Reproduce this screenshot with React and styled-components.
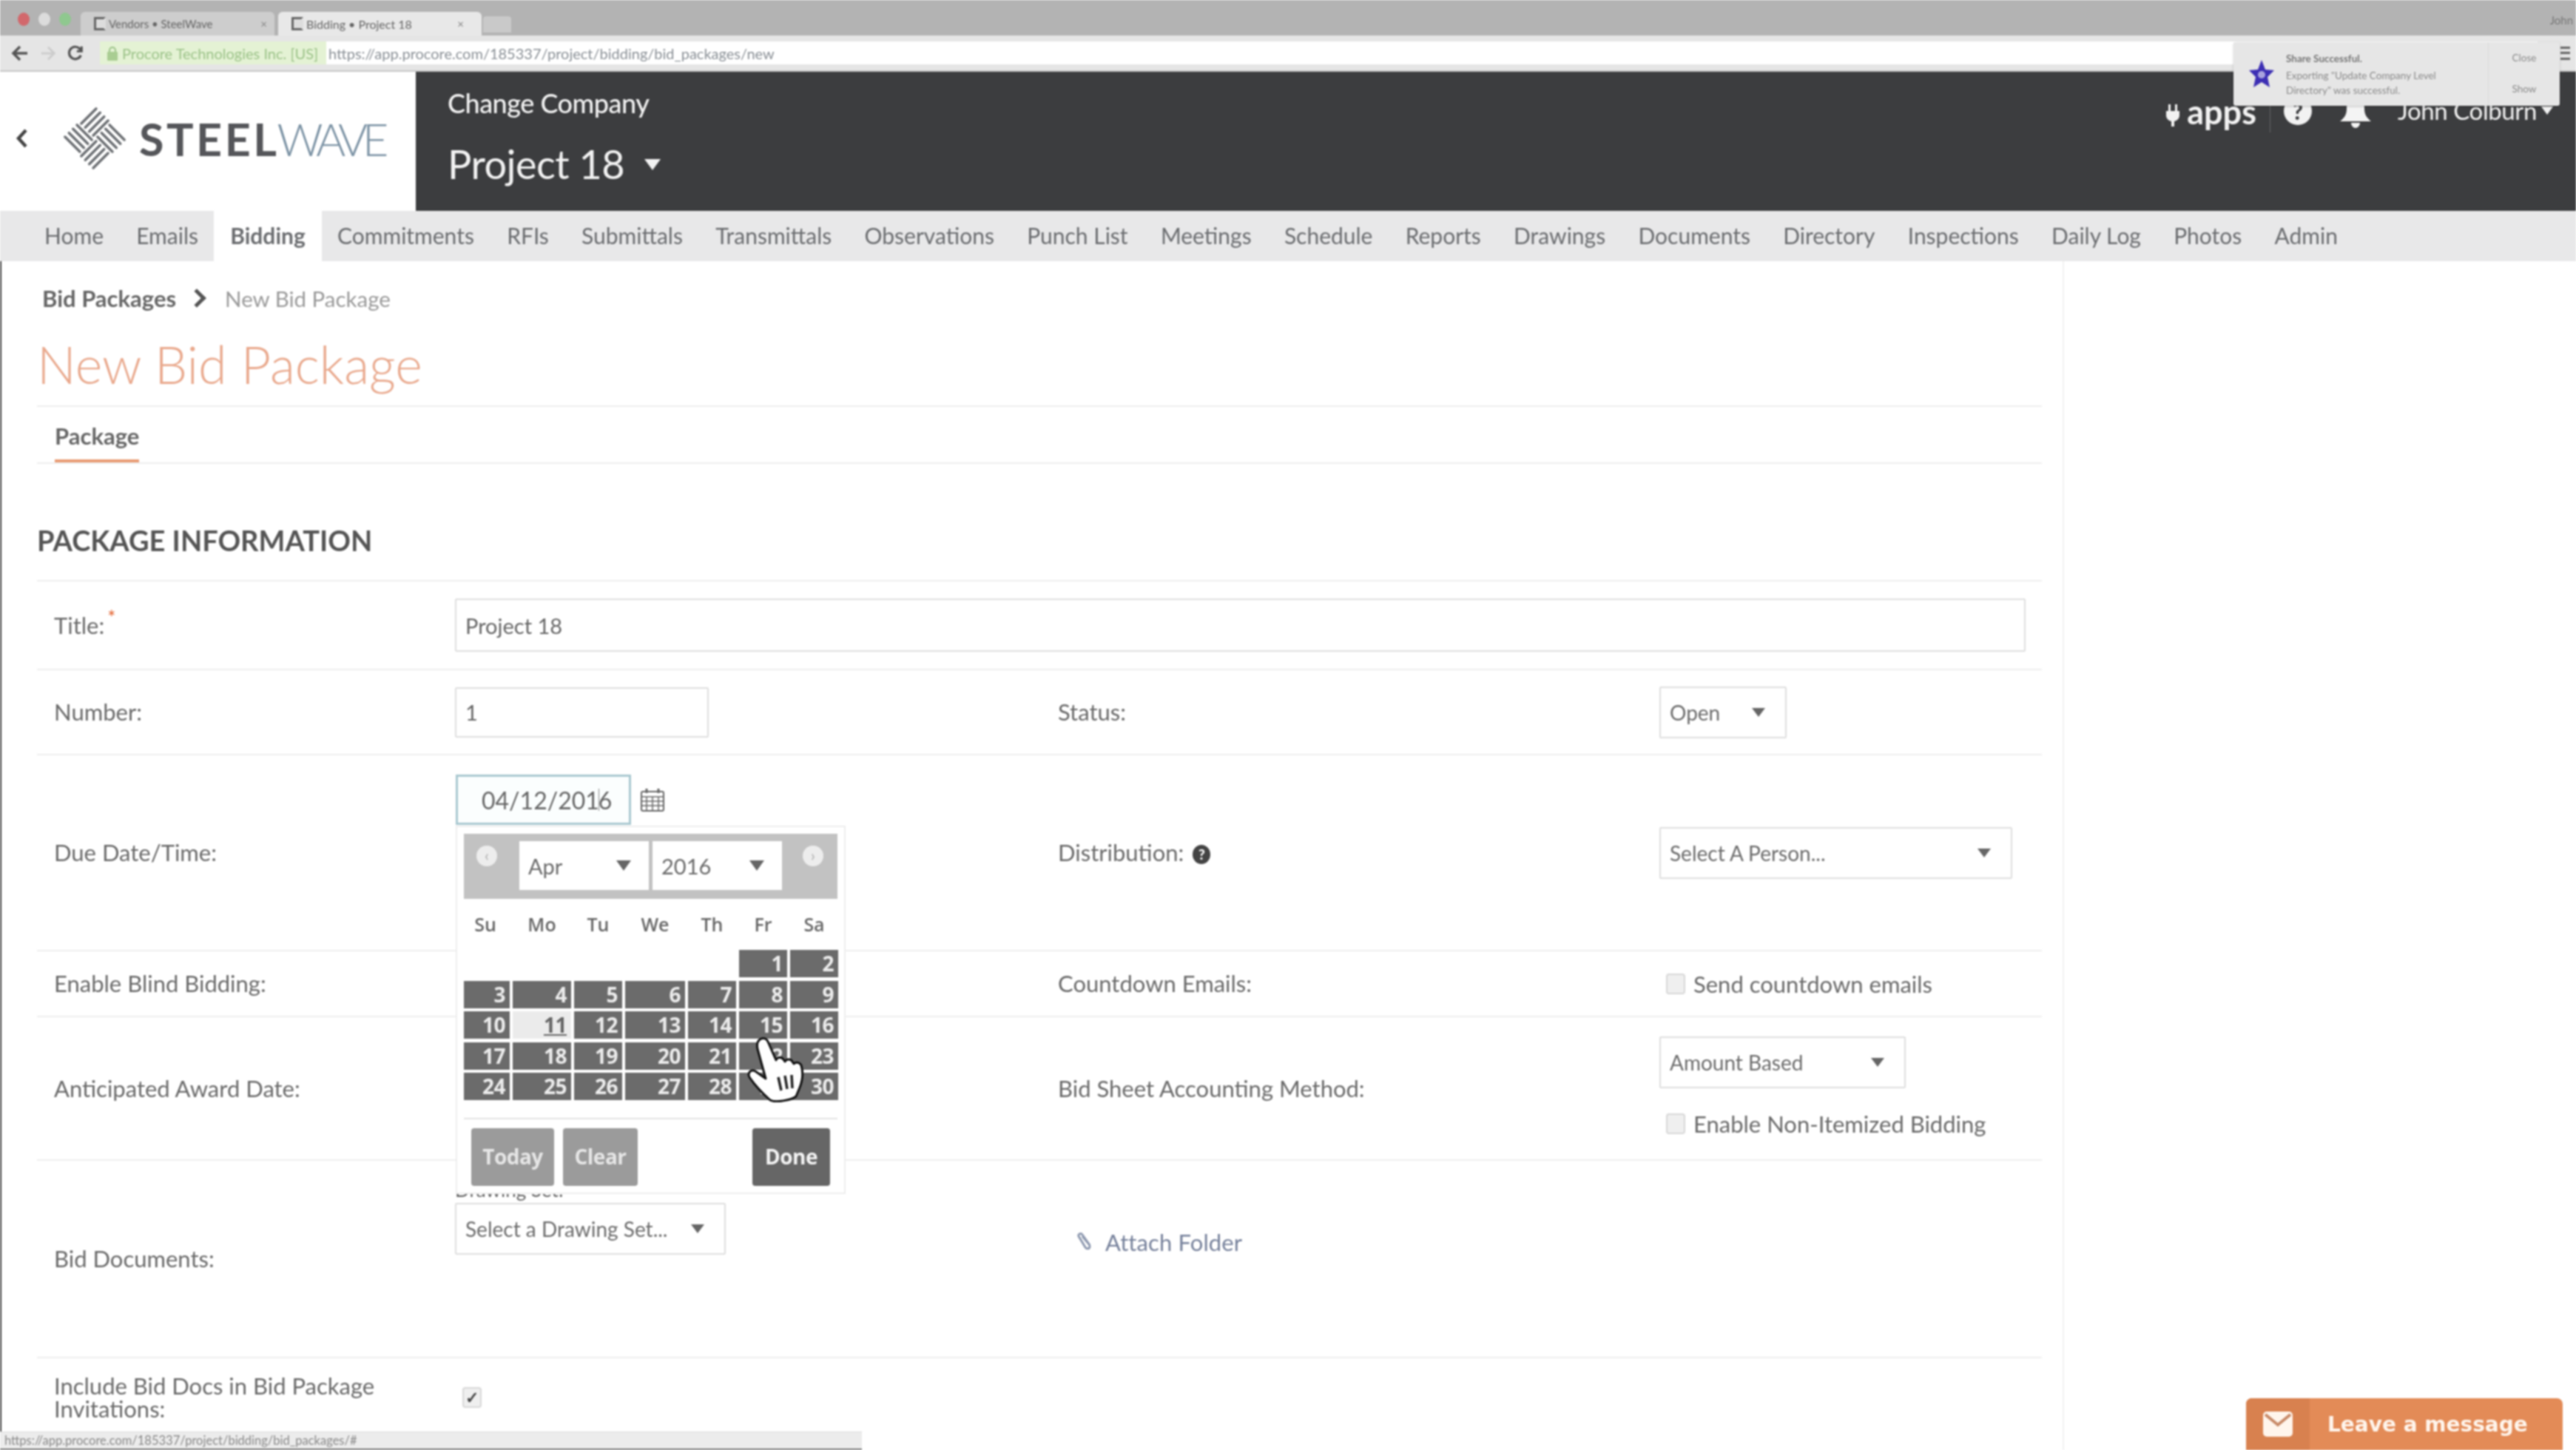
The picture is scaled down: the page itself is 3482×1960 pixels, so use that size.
import React from "react";
import styled, { createGlobalStyle } from "styled-components";

const Global = createGlobalStyle`
  html, body { margin: 0; padding: 0; background: #fff; }
  body { font-family: Lato, "Open Sans", sans-serif; color: #666; }
  * { box-sizing: border-box; }
`;

const Screen = styled.div`
  position: relative;
  width: 3482px;
  height: 1960px;
  overflow: hidden;
  display: flex;
  flex-direction: column;
  background: #fff;
  filter: blur(1px);
`;

/* browser chrome */
const TabStrip = styled.div`
  height: 48px;
  flex: none;
  background: #b3b3b3;
  display: flex;
  align-items: flex-end;
  padding-left: 18px;
`;
const Light = styled.span`
  width: 16px;
  height: 18px;
  margin: 0 6px 13px;
  border-radius: 50%;
  background: ${(p) => p.$c};
`;
const BrowserTab = styled.div`
  width: ${(p) => p.$w}px;
  height: 32px;
  margin-left: ${(p) => p.$ml}px;
  padding: 0 ${(p) => (p.$active ? 24 : 10)}px 0 18px;
  display: flex;
  align-items: center;
  gap: 4px;
  border-radius: 6px 6px 0 0;
  background: ${(p) => (p.$active ? "#e8e8e8" : "#cdcdcd")};
  font-size: ${(p) => (p.$active ? 16 : 15)}px;
  color: #666;
  white-space: nowrap;
`;
const Favicon = styled.span`
  width: 16px;
  height: 18px;
  border: 3px solid #666;
  border-right-color: transparent;
  background: #ddd;
  flex: none;
`;
const TabClose = styled.span`
  margin-left: auto;
  color: #888;
  font-size: 15px;
`;
const NewTab = styled.div`
  width: 38px;
  height: 22px;
  margin: 0 0 4px 2px;
  border-radius: 4px 4px 0 0;
  background: #c9c9c9;
`;
const ChromeUser = styled.div`
  margin: 0 4px 12px auto;
  font-size: 15px;
  color: #777;
`;
const AddressBar = styled.div`
  height: 49px;
  flex: none;
  background: #e5e5e5;
  display: flex;
  align-items: center;
  padding: 0 0 0 15px;
  border-bottom: 2px solid #c6c6c6;
`;
const NavIcons = styled.div`
  width: 120px;
  flex: none;
  display: flex;
  align-items: center;
  gap: 15px;
`;
const Field = styled.div`
  width: 3295px;
  height: 31px;
  display: flex;
  align-items: center;
  background: #fff;
  font-size: 20px;
  color: #8a9096;
  white-space: nowrap;
`;
const Secure = styled.div`
  width: 306px;
  height: 100%;
  padding-left: 10px;
  display: flex;
  align-items: center;
  gap: 6px;
  background: #e4f2d4;
  color: #9cc389;
  margin-right: 3px;
`;
const Hamburger = styled.div`
  position: absolute;
  left: 3461px;
  top: 63px;
  width: 13px;
  height: 18px;
  border-top: 3px solid #666;
  border-bottom: 3px solid #666;
  &::after {
    content: "";
    display: block;
    margin-top: 4px;
    height: 3px;
    background: #666;
  }
`;

/* notification */
const Toast = styled.div`
  position: absolute;
  left: 3019px;
  top: 57px;
  width: 441px;
  height: 86px;
  display: flex;
  background: #e6e6e6;
  border-radius: 3px;
  box-shadow: 0 1px 3px rgba(0, 0, 0, 0.2);
  font-size: 13.5px;
  color: #8b8b8b;
`;
const ToastStar = styled.div`
  width: 71px;
  flex: none;
  display: flex;
  align-items: center;
  justify-content: center;
  padding-left: 4px;
`;
const ToastBody = styled.div`
  width: 273px;
  flex: none;
  padding-top: 12px;
  line-height: 20px;
`;
const ToastTitle = styled.div`
  color: #777;
  font-weight: 700;
  margin-bottom: 3px;
`;
const ToastActions = styled.div`
  flex: 1;
  border-left: 1px solid #dadada;
  display: flex;
  flex-direction: column;
  align-items: center;
  justify-content: space-around;
  padding: 0 0 2px;
`;

/* procore header */
const Header = styled.div`
  height: 188px;
  flex: none;
  display: flex;
  background: #fff;
`;
const Brand = styled.div`
  width: 562px;
  flex: none;
  display: flex;
  align-items: center;
  padding: 0 0 0 20px;
  margin-top: -8px;
`;
const Wordmark = styled.div`
  margin-left: 16px;
  font-size: 61px;
  letter-spacing: 3.5px;
  line-height: 1;
  white-space: nowrap;
  color: #55565a;
  font-weight: 700;
`;
const Wave = styled.span`
  font-weight: 300;
  color: #7b92a4;
  letter-spacing: -7px;
  margin-left: -3px;
`;
const Dark = styled.div`
  flex: 1;
  background: #3c3d3f;
  color: #f2f2f2;
  display: flex;
  justify-content: space-between;
  padding-left: 43px;
`;
const CompanyBlock = styled.div`
  display: flex;
  flex-direction: column;
`;
const ChangeCompany = styled.div`
  margin-top: 21px;
  font-size: 36px;
  line-height: 42px;
  font-weight: 500;
  letter-spacing: -0.5px;
`;
const ProjectName = styled.div`
  margin-top: 22px;
  display: flex;
  align-items: center;
  gap: 27px;
  font-size: 54px;
  line-height: 80px;
  letter-spacing: -0.5px;
`;
const Caret = styled.span`
  display: inline-block;
  flex: none;
  width: 0;
  height: 0;
  border-left: ${(p) => p.$s || 9}px solid transparent;
  border-right: ${(p) => p.$s || 9}px solid transparent;
  border-top: ${(p) => (p.$s || 9) * 1.4}px solid ${(p) => p.$c || "#666"};
`;
const UserTools = styled.div`
  display: flex;
  align-items: flex-start;
  padding: 36px 31px 0 0;
`;
const Apps = styled.div`
  display: flex;
  align-items: center;
  gap: 10px;
  height: 46px;
  padding-right: 18px;
  border-right: 1px solid #666;
  font-size: 45px;
  font-weight: 700;
  line-height: 40px;
`;
const AppsText = styled.span`
  margin-top: -10px;
`;
const HelpBadge = styled.div`
  width: 38px;
  height: 38px;
  margin: -2px 0 0 18px;
  border-radius: 50%;
  background: #f2f2f2;
  color: #3c3d3f;
  font-size: 30px;
  font-weight: 900;
  line-height: 38px;
  text-align: center;
`;
const BellWrap = styled.div`
  position: relative;
  margin: -4px 0 0 38px;
  width: 42px;
  height: 44px;
`;
const BellDot = styled.span`
  position: absolute;
  right: -4px;
  top: -2px;
  width: 15px;
  height: 15px;
  border-radius: 50%;
  background: #c0405a;
`;
const UserName = styled.div`
  margin-left: 36px;
  display: flex;
  align-items: center;
  gap: 6px;
  font-size: 33px;
  line-height: 32px;
  letter-spacing: -0.4px;
`;

/* nav */
const NavBar = styled.div`
  height: 68px;
  flex: none;
  display: flex;
  background: #e8e8e9;
  padding-left: 37px;
`;
const NavItem = styled.div`
  height: 100%;
  padding: 0 ${(p) => (p.$active ? 22 : 23)}px 3px;
  margin-right: -1.75px;
  display: flex;
  align-items: center;
  font-size: 30px;
  color: #6b6d70;
  font-weight: ${(p) => (p.$active ? 700 : 400)};
  background: ${(p) => (p.$active ? "#fff" : "transparent")};
  white-space: nowrap;
`;

/* page */
const Main = styled.div`
  flex: 1;
  width: 2790px;
  padding-left: 48px;
  border-left: 2px solid #3a3a3a;
  border-right: 2px solid #f1f1f1;
  overflow: hidden;
`;
const Content = styled.div`
  width: 2710px;
`;
const Breadcrumb = styled.div`
  height: 100px;
  padding-left: 7px;
  display: flex;
  align-items: center;
  font-size: 29.5px;
  color: #9a9a9a;
`;
const Crumb = styled.span`
  font-size: 31px;
  font-weight: 700;
  color: #666;
`;
const CrumbArrow = styled.span`
  width: 18px;
  height: 18px;
  margin: 0 29px 0 19px;
  border-top: 5px solid #555;
  border-right: 5px solid #555;
  transform: rotate(45deg);
`;
const PageTitle = styled.h1`
  margin: 0;
  height: 97px;
  font-size: 70px;
  line-height: 78px;
  font-weight: 300;
  color: #e9a88c;
  border-bottom: 2px solid #eee;
`;
const Tabs = styled.div`
  height: 77px;
  padding-left: 24px;
  border-bottom: 2px solid #eee;
`;
const ActiveTab = styled.div`
  display: inline-block;
  height: 75px;
  padding-top: 20px;
  font-size: 31px;
  line-height: 38px;
  font-weight: 700;
  color: #666;
  border-bottom: 4px solid #e99a72;
`;
const SectionTitle = styled.h2`
  margin: 0;
  height: 159px;
  padding-top: 81px;
  font-size: 38px;
  line-height: 44px;
  font-weight: 700;
  color: #555;
  border-bottom: 2px solid #eee;
`;
const Row = styled.div`
  position: relative;
  height: ${(p) => p.$h}px;
  display: grid;
  grid-template-columns: 565px 815px 813px 1fr;
  align-items: center;
  border-bottom: ${(p) => (p.$open ? "none" : "2px solid #eee")};
`;
const Label = styled.div`
  padding-left: ${(p) => (p.$first ? 23 : 0)}px;
  font-size: 31px;
  line-height: 31px;
  color: #6a6a6a;
  white-space: pre-line;
`;
const Req = styled.span`
  position: relative;
  top: -12px;
  margin-left: 4px;
  color: #e3632f;
  font-size: 26px;
  line-height: 0;
`;
const TextInput = styled.div`
  width: ${(p) => p.$w}px;
  height: ${(p) => p.$h || 68}px;
  padding-left: 12px;
  display: flex;
  align-items: center;
  border: 2px solid #dedede;
  border-radius: 2px;
  font-size: 29px;
  color: #666;
`;
const Select = styled.div`
  width: ${(p) => p.$w}px;
  height: ${(p) => p.$h || 70}px;
  padding: 0 27px 0 12px;
  display: flex;
  align-items: center;
  justify-content: space-between;
  border: 2px solid #dedede;
  border-radius: 2px;
  background: #fff;
  font-size: 28px;
  color: #6c6c6c;
  white-space: nowrap;
`;
const DateCell = styled.div`
  position: relative;
  align-self: start;
  margin: 26px 0 0 1px;
  display: flex;
  align-items: center;
  gap: 13px;
`;
const DateInput = styled.div`
  width: 237px;
  height: 68px;
  padding-left: 32px;
  display: flex;
  align-items: center;
  border: 3px solid #a9c8d0;
  background: #fbfefe;
  font-size: 32px;
  color: #666;
`;
const Cursor = styled.span`
  display: inline-block;
  width: 0;
  height: 30px;
  border-left: 1px solid #888;
  margin: 0 -1px;
`;

/* datepicker */
const Picker = styled.div`
  position: absolute;
  z-index: 5;
  left: 0;
  top: 69px;
  width: 527px;
  height: 498px;
  padding: 9px 9px 0;
  background: #fff;
  border: 2px solid #eee;
`;
const PickerHead = styled.div`
  position: relative;
  height: 88px;
  padding-left: 75px;
  display: flex;
  gap: 5px;
  background: #c2c2c2;
`;
const PickerSelect = styled.div`
  width: 175px;
  height: 66px;
  margin-top: 10px;
  padding: 0 24px 0 12px;
  display: flex;
  align-items: center;
  justify-content: space-between;
  background: #fff;
  font-size: 29px;
  color: #6a6a6a;
`;
const PickerArrow = styled.span`
  position: absolute;
  top: 16px;
  ${(p) => (p.$right ? "right: 19px;" : "left: 17px;")}
  width: 28px;
  height: 28px;
  border-radius: 50%;
  background: #ededed;
  color: #bbb;
  font-size: 20px;
  font-weight: 700;
  line-height: 26px;
  text-align: center;
`;
const CalGrid = styled.div`
  display: grid;
  grid-template-columns: 62px 79px 65px 81px 65px 65px 65px;
  column-gap: 4px;
  grid-auto-rows: 37px;
  row-gap: 4.5px;
`;
const WeekRow = styled(CalGrid)`
  height: 69px;
  align-items: end;
  grid-auto-rows: 51px;
`;
const WeekDay = styled.div`
  text-align: center;
  font-size: 25px;
  font-weight: 600;
  font-family: "Open Sans", sans-serif;
  color: #666;
  padding-right: ${(p) => (p.$i === 0 ? 4 : 0)}px;
`;
const Day = styled.div`
  padding-right: 6px;
  text-align: right;
  font-size: 28px;
  line-height: 37px;
  font-weight: 700;
  font-family: "Open Sans", sans-serif;
  letter-spacing: -0.5px;
  background: ${(p) => (p.$today ? "#ebebeb" : "#6b6b6b")};
  color: ${(p) => (p.$today ? "#666" : "#ececec")};
  text-decoration: ${(p) => (p.$today ? "underline" : "none")};
`;
const Gap = styled.div``;
const PickerFoot = styled.div`
  margin-top: 24px;
  padding: 12px 10px 0;
  display: flex;
  gap: 12px;
  border-top: 2px solid #e4e4e4;
`;
const PickerButton = styled.div`
  width: ${(p) => p.$w}px;
  height: 78px;
  margin-left: ${(p) => (p.$push ? "auto" : 0)};
  border-radius: 4px;
  background: ${(p) => (p.$dark ? "#666" : "#9b9b9b")};
  color: ${(p) => (p.$dark ? "#f4f4f4" : "#e6e6e6")};
  font-family: "Open Sans", sans-serif;
  font-size: 28px;
  font-weight: 700;
  line-height: 76px;
  letter-spacing: -0.5px;
  text-align: center;
`;
const Hand = styled.svg`
  position: absolute;
  z-index: 6;
  left: 392px;
  top: 282px;
`;

/* checkboxes etc. */
const CheckLine = styled.div`
  display: flex;
  align-items: center;
  gap: 11px;
  padding-left: 9px;
  font-size: 31px;
  color: #6a6a6a;
  white-space: nowrap;
`;
const Box = styled.span`
  width: 26px;
  height: 28px;
  flex: none;
  border-radius: 4px;
  background: #efefef;
  border: 2px solid #d8d8d8;
  color: #444;
  font-size: 22px;
  font-weight: 900;
  line-height: 24px;
  text-align: center;
`;
const AccountingCell = styled.div`
  display: flex;
  flex-direction: column;
  gap: 29px;
  padding-top: 26px;
  align-self: start;
`;
const DrawingCell = styled.div`
  align-self: start;
  padding-top: 24px;
`;
const SmallLabel = styled.div`
  height: 33px;
  font-size: 26px;
  line-height: 30px;
  color: #666;
`;
const AttachFolder = styled.div`
  align-self: start;
  margin-top: 92px;
  padding-left: 23px;
  display: flex;
  align-items: center;
  gap: 17px;
  font-size: 31px;
  line-height: 36px;
  letter-spacing: 0.1px;
  color: #76819b;
`;
const HelpDot = styled.span`
  display: inline-block;
  width: 24px;
  height: 26px;
  margin-left: 12px;
  border-radius: 50%;
  background: #444;
  color: #fff;
  font-size: 19px;
  font-weight: 900;
  line-height: 26px;
  text-align: center;
  vertical-align: 2px;
`;
const IncludeBox = styled(Box)`
  margin-left: 10px;
`;

/* overlays at the bottom */
const StatusBar = styled.div`
  position: absolute;
  left: 0;
  bottom: 0;
  width: 1165px;
  height: 25px;
  padding-left: 6px;
  background: #ececec;
  border-top: 1px solid #ddd;
  border-bottom: 2px solid #777;
  font-size: 16.5px;
  line-height: 22px;
  color: #8a8a8a;
`;
const Chat = styled.div`
  position: absolute;
  left: 3036px;
  top: 1890px;
  width: 428px;
  height: 70px;
  display: flex;
  align-items: center;
  border-radius: 8px 8px 0 0;
  background: #e38b57;
  color: #fff5ec;
  font-family: "DejaVu Sans", sans-serif;
  font-size: 28px;
  font-weight: 700;
  overflow: hidden;
`;
const ChatIcon = styled.div`
  width: 86px;
  height: 100%;
  margin-right: 24px;
  display: flex;
  align-items: center;
  justify-content: center;
  background: #d8814f;
`;

const tabsNav = ["Home", "Emails", "Bidding", "Commitments", "RFIs", "Submittals", "Transmittals", "Observations", "Punch List", "Meetings", "Schedule", "Reports", "Drawings", "Documents", "Directory", "Inspections", "Daily Log", "Photos", "Admin"];
const weekDays = ["Su", "Mo", "Tu", "We", "Th", "Fr", "Sa"];
const days = Array.from({ length: 30 }, (_, i) => i + 1);

function LogoMark() {
  const blocks = [
    { cx: 44, cy: 22, dir: 1 },
    { cx: 44, cy: 66, dir: 1 },
    { cx: 22, cy: 44, dir: -1 },
    { cx: 66, cy: 44, dir: -1 },
  ];
  const lines = [];
  blocks.forEach((b, i) => {
    [-1.5, -0.5, 0.5, 1.5].forEach((k) => {
      const ox = k * 5.4;
      const oy = k * 5.4 * b.dir;
      lines.push(
        <line
          key={`${i}-${k}`}
          x1={b.cx + ox - 10}
          y1={b.cy + oy + 10 * b.dir}
          x2={b.cx + ox + 10}
          y2={b.cy + oy - 10 * b.dir}
        />
      );
    });
  });
  return (
    <svg width="88" height="88" viewBox="0 0 88 88" stroke="#6d7074" strokeWidth="3.6" strokeLinecap="round" style={{ flex: "none" }}>
      {lines}
    </svg>
  );
}

export default function App() {
  return (
    <Screen>
      <Global />
      <TabStrip>
        <Light $c="#d2686c" />
        <Light $c="#dcdcdc" />
        <Light $c="#8fc88f" />
        <BrowserTab $w={262} $ml={7}><Favicon />Vendors • SteelWave<TabClose>×</TabClose></BrowserTab>
        <BrowserTab $w={275} $ml={5} $active><Favicon />Bidding • Project 18<TabClose>×</TabClose></BrowserTab>
        <NewTab />
        <ChromeUser>John</ChromeUser>
      </TabStrip>
      <AddressBar>
        <NavIcons>
          <svg width="24" height="24" viewBox="0 0 24 24" fill="none" stroke="#555" strokeWidth="3.5"><path d="M22 12H4M12 3l-9 9 9 9" /></svg>
          <svg width="22" height="22" viewBox="0 0 24 24" fill="none" stroke="#ccc" strokeWidth="3"><path d="M2 12h18M12 3l9 9-9 9" /></svg>
          <svg width="22" height="24" viewBox="0 0 24 24" fill="none" stroke="#555" strokeWidth="3.5"><path d="M20 15a9 9 0 1 1-2-10l3 3M21 2v7h-7" /></svg>
        </NavIcons>
        <Field>
          <Secure>
            <svg width="14" height="20" viewBox="0 0 14 20"><path d="M3 9V6a4 4 0 0 1 8 0v3" fill="none" stroke="#9cc389" strokeWidth="2" /><rect y="8" width="14" height="12" rx="1" fill="#a9cd92" /></svg>
            Procore Technologies Inc. [US]
          </Secure>
          https://app.procore.com/185337/project/bidding/bid_packages/new
        </Field>
      </AddressBar>
      <Hamburger />

      <Header>
        <Brand>
          <svg width="20" height="26" viewBox="0 0 20 26" fill="none" stroke="#444" strokeWidth="4.5" style={{ flex: "none", marginRight: 44 }}><path d="M15 2L5 13l10 11" /></svg>
          <LogoMark />
          <Wordmark>STEEL<Wave>WAVE</Wave></Wordmark>
        </Brand>
        <Dark>
          <CompanyBlock>
            <ChangeCompany>Change Company</ChangeCompany>
            <ProjectName>Project 18 <Caret $s={11} $c="#f2f2f2" /></ProjectName>
          </CompanyBlock>
          <UserTools>
            <Apps>
              <svg width="18" height="30" viewBox="0 0 18 30" fill="#f2f2f2"><path d="M3 0h3v9h6V0h3v9h3v6c0 4-3 7-7 8v7H7v-7c-4-1-7-4-7-8V9h3z" /></svg>
              <AppsText>apps</AppsText>
            </Apps>
            <HelpBadge>?</HelpBadge>
            <BellWrap>
              <svg width="42" height="44" viewBox="0 0 42 44" fill="#f4f4f4"><path d="M21 0c3 0 4 2 4 4 7 2 8 8 8 14 0 8 3 12 9 17H0c6-5 9-9 9-17 0-6 1-12 8-14 0-2 1-4 4-4zM15 37h12c0 4-3 7-6 7s-6-3-6-7z" /></svg>
              <BellDot />
            </BellWrap>
            <UserName>John Colburn <Caret $s={8} $c="#f2f2f2" /></UserName>
          </UserTools>
        </Dark>
      </Header>

      <Toast>
        <ToastStar>
          <svg width="36" height="40" viewBox="0 0 36 40"><polygon points="18,1 23,14 35,15 26,24 29,38 18,31 7,38 10,24 1,15 13,14" fill="#3d2fb4" /><circle cx="18" cy="21" r="5" fill="#a9a3de" /></svg>
        </ToastStar>
        <ToastBody>
          <ToastTitle>Share Successful.</ToastTitle>
          Exporting "Update Company Level<br />Directory" was successful.
        </ToastBody>
        <ToastActions><span>Close</span><span>Show</span></ToastActions>
      </Toast>

      <NavBar>
        {tabsNav.map((t) => (
          <NavItem key={t} $active={t === "Bidding"}>{t}</NavItem>
        ))}
      </NavBar>

      <Main>
        <Content>
          <Breadcrumb><Crumb>Bid Packages</Crumb><CrumbArrow />New Bid Package</Breadcrumb>
          <PageTitle>New Bid Package</PageTitle>
          <Tabs><ActiveTab>Package</ActiveTab></Tabs>
          <SectionTitle>PACKAGE INFORMATION</SectionTitle>

          <Row $h={120}>
            <Label $first>Title:<Req>*</Req></Label>
            <TextInput $w={2123} $h={72} style={{ gridColumn: "2 / 5" }}>Project 18</TextInput>
          </Row>
          <Row $h={115}>
            <Label $first>Number:</Label>
            <TextInput $w={343}>1</TextInput>
            <Label>Status:</Label>
            <Select $w={172}>Open <Caret /></Select>
          </Row>
          <Row $h={265}>
            <Label $first>Due Date/Time:</Label>
            <DateCell>
              <DateInput>04/12/201<Cursor />6</DateInput>
              <svg width="32" height="32" viewBox="0 0 32 32" fill="none" stroke="#666" strokeWidth="2">
                <rect x="1" y="5" width="30" height="26" rx="2" />
                <path d="M1 12h30M1 18h30M1 24h30M8 12v19M16 12v19M24 12v19" strokeWidth="1.5" />
                <path d="M8 1v6M24 1v6" strokeWidth="3" />
              </svg>
              <Picker>
                <PickerHead>
                  <PickerArrow>‹</PickerArrow>
                  <PickerSelect>Apr <Caret $s={10} /></PickerSelect>
                  <PickerSelect>2016 <Caret $s={10} /></PickerSelect>
                  <PickerArrow $right>›</PickerArrow>
                </PickerHead>
                <WeekRow>
                  {weekDays.map((d, i) => <WeekDay key={d} $i={i}>{d}</WeekDay>)}
                </WeekRow>
                <CalGrid>
                  {Array.from({ length: 5 }, (_, i) => <Gap key={i} />)}
                  {days.map((d) => <Day key={d} $today={d === 11}>{d}</Day>)}
                </CalGrid>
                <PickerFoot>
                  <PickerButton $w={112}>Today</PickerButton>
                  <PickerButton $w={101}>Clear</PickerButton>
                  <PickerButton $w={105} $dark $push>Done</PickerButton>
                </PickerFoot>
                <Hand width="82" height="90" viewBox="0 0 82 90">
                  <path d="M16 6c4-4 10-3 12 2l11 25c1-4 7-5 10-1l2 3c2-4 8-4 10 0l2 3c3-3 8-2 10 2 3 10 2 20-2 30l-5 12c-6 5-28 9-35 5C21 78 11 68 3 56c-3-6 2-11 8-8l14 10L14 18c-1-5-1-9 2-12z" fill="#fff" stroke="#111" strokeWidth="3" strokeLinejoin="round" />
                  <path d="M42 56l4 18M51 54l3 18M60 53l1 18" stroke="#222" strokeWidth="3.5" fill="none" />
                </Hand>
              </Picker>
            </DateCell>
            <Label>Distribution:<HelpDot>?</HelpDot></Label>
            <Select $w={477}>Select A Person... <Caret /></Select>
          </Row>
          <Row $h={89}>
            <Label $first>Enable Blind Bidding:</Label>
            <Gap />
            <Label>Countdown Emails:</Label>
            <CheckLine><Box />Send countdown emails</CheckLine>
          </Row>
          <Row $h={194}>
            <Label $first>Anticipated Award Date:</Label>
            <Gap />
            <Label>Bid Sheet Accounting Method:</Label>
            <AccountingCell>
              <Select $w={333}>Amount Based <Caret /></Select>
              <CheckLine><Box />Enable Non-Itemized Bidding</CheckLine>
            </AccountingCell>
          </Row>
          <Row $h={267}>
            <Label $first>Bid Documents:</Label>
            <DrawingCell>
              <SmallLabel>Drawing Set:</SmallLabel>
              <Select $w={366} $h={70}>Select a Drawing Set... <Caret /></Select>
            </DrawingCell>
            <AttachFolder>
              <svg width="24" height="28" viewBox="0 0 24 28" fill="none" stroke="#8f9ab0" strokeWidth="3"><path d="M20 18L10 4c-2-3-6-1-5 2l9 15c2 3 6 2 6-1 0-1 0-2-1-3L10 6" /></svg>
              Attach Folder
            </AttachFolder>
          </Row>
          <Row $h={106} $open>
            <Label $first>{"Include Bid Docs in Bid Package\nInvitations:"}</Label>
            <IncludeBox>✓</IncludeBox>
          </Row>
        </Content>
      </Main>

      <StatusBar>https://app.procore.com/185337/project/bidding/bid_packages/#</StatusBar>
      <Chat>
        <ChatIcon>
          <svg width="40" height="34" viewBox="0 0 40 34"><rect width="40" height="34" rx="5" fill="#fff5ec" /><path d="M3 4l17 14L37 4" fill="none" stroke="#c88a68" strokeWidth="4" /></svg>
        </ChatIcon>
        Leave a message
      </Chat>
    </Screen>
  );
}
